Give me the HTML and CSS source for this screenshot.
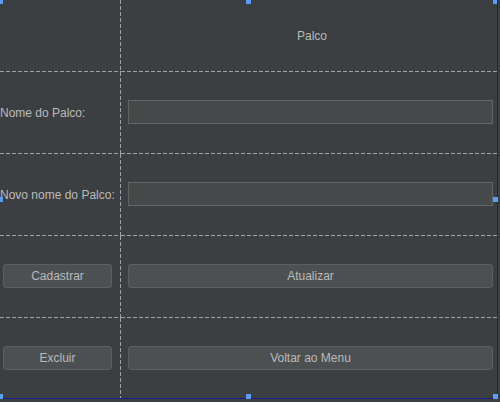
FILE: index.html
```html
<!DOCTYPE html>
<html>
<head>
<meta charset="utf-8">
<link rel="stylesheet" href="styles.css">
</head>
<body>
<div class="canvas">
  <div class="form">
    <div class="cell c1 hline"></div>
    <div class="cell c2 hline center"><span class="title">Palco</span></div>

    <div class="cell c1 hline"><span class="label">Nome do Palco:</span></div>
    <div class="cell c2 hline"><div class="field"></div></div>

    <div class="cell c1 hline"><span class="label">Novo nome do Palco:</span></div>
    <div class="cell c2 hline"><div class="field"></div></div>

    <div class="cell c1 hline"><button class="btn small">Cadastrar</button></div>
    <div class="cell c2 hline"><button class="btn wide">Atualizar</button></div>

    <div class="cell c1 last"><button class="btn small">Excluir</button></div>
    <div class="cell c2 last"><button class="btn wide">Voltar ao Menu</button></div>
  </div>
  <span class="handle h-tl"></span>
  <span class="handle h-tc"></span>
  <span class="handle h-tr"></span>
  <span class="handle h-ml"></span>
  <span class="handle h-mr"></span>
  <span class="handle h-bl"></span>
  <span class="handle h-bc"></span>
  <span class="handle h-br"></span>
</div>
</body>
</html>
```
FILE: styles.css
```css
html, body {
  margin: 0;
  padding: 0;
  background: #3c3f41;
  width: 500px;
  height: 402px;
  overflow: hidden;
  font-family: "Liberation Sans", Arial, sans-serif;
  font-size: 12px;
  color: #bbbbbb;
}

.canvas {
  position: relative;
  width: 500px;
  height: 402px;
}

.form {
  display: grid;
  grid-template-columns: 121px 376px;
  grid-template-rows: 72px 82px 82px 82px 80px;
  width: 497px;
  height: 398px;
  border-right: 1px solid #1c1c8a;
  border-bottom: 1px solid #1c1c8a;
}

.cell {
  display: flex;
  align-items: center;
  min-width: 0;
  box-sizing: border-box;
  padding-bottom: 2px;
}

.cell.last {
  padding-bottom: 0;
}

.c1 {
  background-image: repeating-linear-gradient(to bottom, #9ea2ac 0 4px, transparent 4px 6px);
  background-size: 1px 100%;
  background-position: right top;
  background-repeat: no-repeat;
}

.c1.hline {
  background-image:
    repeating-linear-gradient(to bottom, #9ea2ac 0 4px, transparent 4px 6px),
    repeating-linear-gradient(to right, #9ea2ac 0 4px, transparent 4px 6px);
  background-size: 1px 100%, 100% 1px;
  background-position: right top, left bottom;
  background-repeat: no-repeat;
}

.c2.hline {
  background-image: repeating-linear-gradient(to right, #9ea2ac 0 4px, transparent 4px 6px);
  background-size: 100% 1px;
  background-position: left bottom;
  background-repeat: no-repeat;
}

.c2 {
  padding-left: 7px;
  padding-right: 4px;
}

.center {
  justify-content: center;
}

.title {
  padding-left: 3px;
  padding-top: 2px;
}

.label {
  white-space: nowrap;
  padding-top: 2px;
}

.field {
  width: 100%;
  height: 24px;
  box-sizing: border-box;
  background: #45494a;
  border: 1px solid #646464;
}

.btn {
  box-sizing: border-box;
  height: 24px;
  margin: 0;
  padding: 0;
  background: #4c5052;
  border: 1px solid #5e6060;
  border-radius: 3px;
  color: #bbbbbb;
  font-family: "Liberation Sans", Arial, sans-serif;
  font-size: 12px;
}

.btn.small {
  width: 109px;
  margin-left: 3px;
}

.btn.wide {
  width: 100%;
}

.handle {
  position: absolute;
  background: #5a9cf8;
  width: 5px;
  height: 5px;
}

.h-tl { left: 0; top: 0; width: 3px; height: 4px; }
.h-tc { left: 246px; top: 0; height: 4px; }
.h-tr { left: 493px; top: 0; width: 4px; height: 4px; }
.h-ml { left: 0; top: 197px; width: 3px; }
.h-mr { left: 493px; top: 197px; }
.h-bl { left: 0; top: 394px; width: 3px; }
.h-bc { left: 246px; top: 394px; }
.h-br { left: 493px; top: 394px; }
```
